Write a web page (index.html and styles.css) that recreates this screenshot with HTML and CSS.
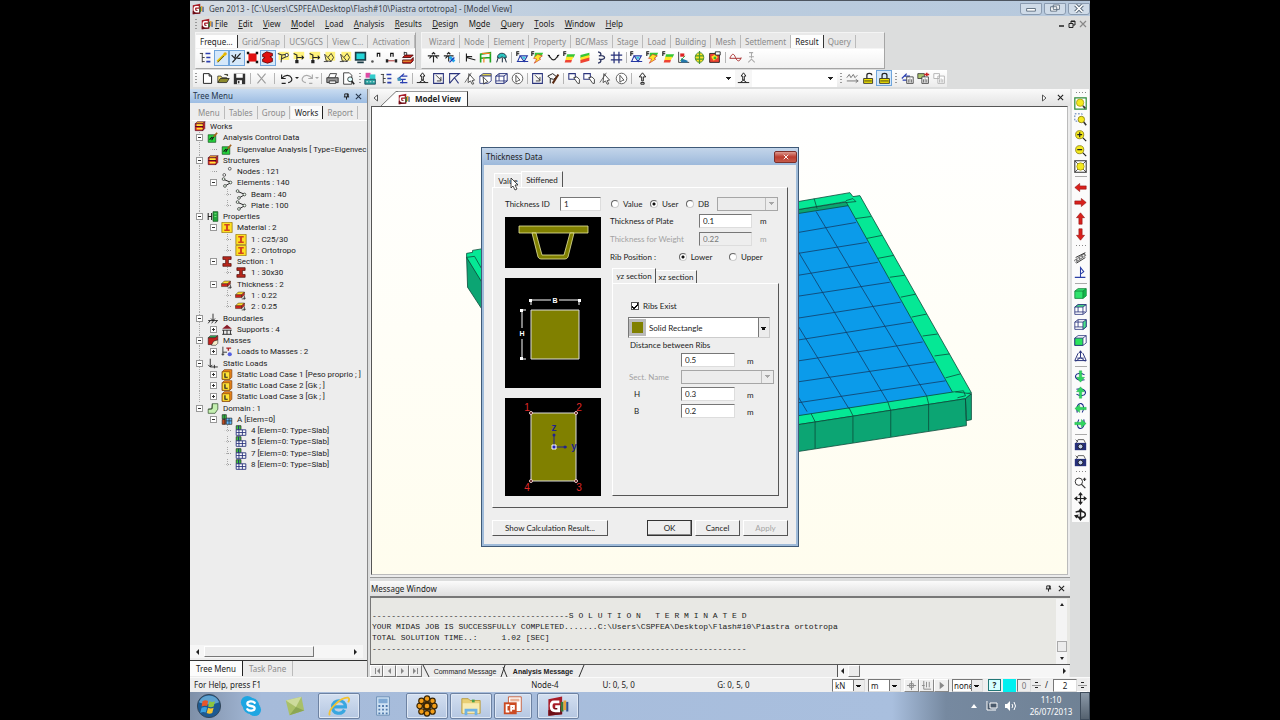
FILE: index.html
```html
<!DOCTYPE html>
<html lang="en">
<head>
<meta charset="utf-8">
<title>Gen 2013 - Piastra ortotropa</title>
<link rel="stylesheet" href="styles.css">
</head>
<body>
<svg class="sprite" aria-hidden="true">
  <symbol id="logo" viewBox="0 0 16 16"><path fill="#a81d28" d="M1 3 11 1v13L1 15z"/><path fill="#6e0f18" d="M1 11l10-3v6L1 15z"/><path fill="none" stroke="#fff" stroke-width="2" d="M9 5H5C3.500 5 3 6 3 8s1 3.500 3 3.500h2.500V8.500H6"/><path fill="#3b7a3a" d="M10 5h2v7h-2z"/><path fill="#e8a33a" d="M12 4h2v7h-2z"/><path fill="#32508e" d="M14 5h1.500v7H14z"/></symbol>
  <symbol id="tree" viewBox="0 0 16 16"><path fill="none" stroke="#222" d="M1 3h4M4 3v11M4 8h3M4 13h3"/><path fill="none" stroke="#2a3fb0" stroke-width="2" d="M8 3h6M9 8h5M9 13h5"/></symbol>
  <symbol id="wand" viewBox="0 0 16 16"><path stroke="#f0c800" stroke-width="3" d="M3 13 12 4"/><path stroke="#333" d="M3 14 11 6"/><circle cx="12.500" cy="3.500" r="2" fill="#e8b400"/></symbol>
  <symbol id="wand2" viewBox="0 0 16 16"><path fill="none" stroke="#222" stroke-width="1.500" d="M3 14 13 3M2 5l4 4 1-5M9 9h4"/></symbol>
  <symbol id="redbox" viewBox="0 0 16 16"><path fill="#e01010" d="M3 3h10v10H3z"/><path fill="#111" d="M1 1h3v3H1zM12 1h3v3h-3zM1 12h3v3H1zM12 12h3v3h-3z"/></symbol>
  <symbol id="redblob" viewBox="0 0 16 16"><path fill="#e01010" stroke="#5a0000" d="M2 4l5-3 7 2v3l-3 1 3 2v4l-6 2-6-2v-3l3-2-3-1z"/></symbol>
  <symbol id="yflag" viewBox="0 0 16 16"><path fill="#fff27a" d="M2 1h13v10H2z"/><path fill="none" stroke="#333" stroke-width="1.300" d="M1 3l5 2 6-1M6 5l-1 9M5 10l6-3"/><circle cx="12" cy="5" r="2" fill="#fff" stroke="#222"/></symbol>
  <symbol id="ytee" viewBox="0 0 16 16"><path fill="#fff27a" d="M2 1h13v9H2z"/><path fill="none" stroke="#222" stroke-width="1.400" d="M2 3l4 2v9M6 8h6"/><path fill="#222" d="M12 5l3 3-3 3zM4 11h4v4H4z"/></symbol>
  <symbol id="yweb" viewBox="0 0 16 16"><path fill="#fff27a" d="M3 1h12v11H3z"/><path fill="none" stroke="#222" d="M2 4l4 4 4-5 3 5-3 5-6-1zM1 13h5M6 8l4 5"/></symbol>
  <symbol id="screen" viewBox="0 0 16 16"><path fill="#1a3b45" d="M1 1h14v11H1zM4 13h8v2H4z"/><path fill="#25d5d8" d="M3 3h10v7H3z"/></symbol>
  <symbol id="num" viewBox="0 0 16 16"><path fill="none" stroke="#111" stroke-width="1.400" d="M9 7V2M9 3h3v4"/><circle cx="3" cy="13" r="1.600" fill="#555"/></symbol>
  <symbol id="numbar" viewBox="0 0 16 16"><path fill="none" stroke="#111" stroke-width="1.400" d="M7 7V2M7 3h3v4"/><path fill="none" stroke="#b55" stroke-width="1.500" d="M3 12h9"/><path fill="#222" d="M1 10h3v4H1zM12 10h3v4h-3z"/></symbol>
  <symbol id="layers" viewBox="0 0 16 16"><path fill="#c8221c" stroke="#400" d="M2 8l3-3h10l-3 3zM2 11h10l3-3v4l-3 3H2z"/><path stroke="#f3d23a" d="M2 12.500h10"/><path fill="none" stroke="#111" d="M4 5V1M4 2h3v3"/></symbol>
  <symbol id="react" viewBox="0 0 16 16"><path fill="none" stroke="#222" stroke-width="1.400" d="M1 6h14M8 6v8M3 9l3-3M13 9l-3-3M6 4l2-2 2 2"/></symbol>
  <symbol id="react2" viewBox="0 0 16 16"><path fill="none" stroke="#222" stroke-width="1.400" d="M1 6h12M7 6v7M3 9l3-3M5 4l2-2 2 2"/><path stroke="#22a5e8" stroke-width="3.500" d="M8 7l6 6"/><path stroke="#1b3ab5" stroke-width="1.500" d="M8 14l6-6"/></symbol>
  <symbol id="deform" viewBox="0 0 16 16"><path fill="none" stroke="#222" stroke-width="1.400" d="M3 3v10M3 8l11 3M3 7h7"/></symbol>
  <symbol id="frame" viewBox="0 0 16 16"><path fill="none" stroke="#22a522" stroke-width="2" d="M2 14V4l12-2v12M2 9l12-1"/><path fill="none" stroke="#f58220" stroke-width="1.500" d="M4 3h10M6 8v6"/></symbol>
  <symbol id="arch" viewBox="0 0 16 16"><path fill="#2bc3c0" stroke="#123" d="M3 8C3 1 14 1 14 8l-3 1-2-2-3 2z"/><path fill="none" stroke="#123" stroke-width="1.200" d="M4 8l-2 6M9 8v6M12 8l2 6"/></symbol>
  <symbol id="tri" viewBox="0 0 16 16"><path fill="none" stroke="#2336a3" stroke-width="1.300" d="M5 6h9l-4 7zM1 13h14M5 6l-3 7"/><path fill="none" stroke="#111" stroke-width="1.300" d="M1 6V1h3M1 3.500h3"/><path fill="#3bc6e0" d="M7 7h5l-2 4z"/></symbol>
  <symbol id="bolt" viewBox="0 0 16 16"><path fill="#37c837" d="M5 2h10l-3 6H4z"/><path fill="#ffe326" stroke="#c33" stroke-width=".8" d="M8 4l6 2-4 3 2 1-8 5 3-5-4-1z"/><path fill="none" stroke="#111" stroke-width="1.300" d="M1 6V1h3M1 3.500h3"/></symbol>
  <symbol id="moment" viewBox="0 0 16 16"><path fill="none" stroke="#222" stroke-width="1.400" d="M1 5c3 0 3 6 7 6s4-6 7-6M3 5v3M13 5v3"/></symbol>
  <symbol id="plate" viewBox="0 0 16 16"><path fill="#36c636" d="M5 4h10l-2 4H4z"/><path fill="#ffe326" d="M4 7h9l-2 4H3z"/><path fill="#e43" d="M3 11h8l-1 3H2z"/><path fill="none" stroke="#111" stroke-width="1.300" d="M1 6V1h3M1 3.500h3"/></symbol>
  <symbol id="contour" viewBox="0 0 16 16"><path fill="#36c636" d="M3 5l11-3v4L3 9z"/><path fill="#ffe326" d="M3 8l11-3v4L3 12z"/><path fill="#e43" d="M3 11l11-3v4L3 15z"/></symbol>
  <symbol id="brace" viewBox="0 0 16 16"><path fill="none" stroke="#2d3560" stroke-width="1.600" d="M5 1c5 1 4 5 1 5 4-1 7 0 7 2s-3 3-7 2c3 0 4 4-1 5"/></symbol>
  <symbol id="grid" viewBox="0 0 16 16"><path fill="none" stroke="#26307a" stroke-width="1.500" d="M5 1v14M11 1v14M1 5h14M1 11h14"/></symbol>
  <symbol id="solid" viewBox="0 0 16 16"><path fill="#ffe326" stroke="#287a28" d="M8 2c7 0 7 12 0 12S1 2 8 2z"/><path fill="none" stroke="#4a9a2a" stroke-width="1.500" d="M8 0v16M3 6h10M3 10h10"/></symbol>
  <symbol id="map" viewBox="0 0 16 16"><path fill="#e43" stroke="#111" d="M2 3h12v11H2z"/><path fill="#ffe326" d="M4 7l5-3 3 4-5 4z"/><path fill="#3b3" d="M7 7h3v3H7z"/><path fill="#fff" stroke="#111" d="M9 1h6v4H9z"/></symbol>
  <symbol id="chart" viewBox="0 0 16 16"><path fill="none" stroke="#222" d="M2 1v13h13"/><path fill="#d22" d="M4 3h5v4H4z"/><path fill="#27a" d="M5 9l8 3v2H5z"/><path stroke="#2a2" d="M4 12l6-6"/></symbol>
  <symbol id="wave" viewBox="0 0 16 16"><path fill="none" stroke="#a33" stroke-width="1.200" d="M1 9C4 2 6 3 8 8s5 6 7 0M1 9h14"/></symbol>
  <symbol id="ghost" viewBox="0 0 16 16"><path fill="none" stroke="#aaa" stroke-width="1.300" d="M8 2v7M4 14l4-4 4 4M5 2h5M5 7h6"/></symbol>
  <symbol id="new" viewBox="0 0 16 16"><path fill="#fff" stroke="#222" stroke-width="1.200" d="M3 2h7l3 3v9H3zM10 2v3h3"/></symbol>
  <symbol id="open" viewBox="0 0 16 16"><path fill="#f7e36b" stroke="#333" d="M1 13V5h4l1 2h6v2"/><path fill="#8c8a2c" stroke="#222" d="M1 13l3-5h11l-3 5zM9 3h4v2"/></symbol>
  <symbol id="save" viewBox="0 0 16 16"><path fill="#333" d="M1 2h14v13H1z"/><path fill="#fff" d="M4 2h8v5H4zM5 10h6v5H5z"/><path fill="#333" d="M6 11h2v3H6z"/></symbol>
  <symbol id="cut" viewBox="0 0 16 16"><path stroke="#9a9a9a" stroke-width="1.300" d="M3 2l10 12M13 2L3 14"/></symbol>
  <symbol id="undo" viewBox="0 0 16 16"><path fill="none" stroke="#222" stroke-width="1.400" d="M2 8c4-5 10-5 12-1s-2 6-4 6M2 3v5h5M2 14h5"/></symbol>
  <symbol id="redo" viewBox="0 0 16 16"><path fill="none" stroke="#aaa" stroke-width="1.400" d="M14 8C10 3 4 3 2 7s2 6 4 6M14 3v5H9M10 14h4"/></symbol>
  <symbol id="print" viewBox="0 0 16 16"><path fill="#999" stroke="#222" d="M1 7h14v6H1z"/><path fill="#fff" stroke="#222" d="M5 2h8l-2 5H3zM4 11h8v3H4z"/></symbol>
  <symbol id="preview" viewBox="0 0 16 16"><path fill="#fff" stroke="#222" d="M2 1h7l3 3v11H2z"/><circle cx="10" cy="9" r="3" fill="#dff" stroke="#222"/><path stroke="#222" stroke-width="2" d="M12 11l3 4"/></symbol>
  <symbol id="palette" viewBox="0 0 16 16"><path fill="#e04aa5" d="M2 1h6v6H2z"/><path fill="#3cc" d="M7 3h7v6H7z"/><path fill="#2aa3a0" stroke="#145" d="M1 9h13v6H1z"/><path stroke="#fff" d="M3 12h2M7 12h2M11 12h2"/></symbol>
  <symbol id="treeblue" viewBox="0 0 16 16"><path fill="none" stroke="#2a3fb0" stroke-width="1.500" d="M2 9l8-7M3 9h9M6 5h8M5 13h9M8 9v5"/><path fill="#49b" d="M2 7h4v4H2z"/></symbol>
  <symbol id="selnode" viewBox="0 0 16 16"><path fill="#fff" stroke="#222" stroke-width="1.200" d="M5 5l3-4 3 4H9v5H7V5zM1 13h14M4 13l4-3 4 3"/></symbol>
  <symbol id="selbox" viewBox="0 0 16 16"><path fill="none" stroke="#2b347c" stroke-width="1.300" d="M2 2h12v12H2z"/><path fill="none" stroke="#222" d="M5 4l6 6M11 6v5H6"/></symbol>
  <symbol id="selpoly" viewBox="0 0 16 16"><path fill="none" stroke="#2b347c" stroke-width="1.300" d="M2 14V2h12L8 7l5 7M2 14l6-7"/></symbol>
  <symbol id="curs" viewBox="0 0 16 16"><path fill="#fff" stroke="#333" d="M6 2l7 8-3 .5 2 4-2 .5-2-4-3 2z"/><path stroke="#555" d="M1 13L9 1"/></symbol>
  <symbol id="cube" viewBox="0 0 16 16"><path fill="#fff" stroke="#26307a" stroke-width="1.200" d="M1 5l4-3h10v9l-4 3H1zM1 5h10v9M11 5l4-3"/><path fill="none" stroke="#26307a" d="M5 2v9H1M5 11h10"/></symbol>
  <symbol id="cubey" viewBox="0 0 16 16"><path fill="#f3e04a" stroke="#26307a" d="M1 5l4-3h10v3H1z"/><path fill="#fff" stroke="#26307a" d="M1 5h14v6l-4 3H1z"/><path fill="#fff" stroke="#222" d="M5 6l6 6-3 1-2 2z"/></symbol>
  <symbol id="selcirc" viewBox="0 0 16 16"><circle cx="8" cy="8" r="6.500" fill="#fff" stroke="#444"/><path fill="#fff" stroke="#333" d="M6 4l5 6-2 .5-3 2z"/></symbol>
  <symbol id="paint" viewBox="0 0 16 16"><path fill="none" stroke="#222" stroke-width="1.200" d="M1 5l6-3 5 4-4 3-4-1zM4 8v6"/><path stroke="#5a2a12" stroke-width="2.500" d="M14 3L7 14"/></symbol>
  <symbol id="pasteb" viewBox="0 0 16 16"><path fill="#fff" stroke="#2b347c" stroke-width="1.300" d="M1 2h8v7H1z"/><path fill="#fff" stroke="#222" d="M7 7l4-1 3 3v5h-2z"/></symbol>
  <symbol id="updown" viewBox="0 0 16 16"><path fill="none" stroke="#222" stroke-width="1.200" d="M4 6l4-5 4 5H9v5H7V6zM6 13h4v2H6z"/></symbol>
  <symbol id="lockopen" viewBox="0 0 16 16"><path fill="none" stroke="#222" stroke-width="1.500" d="M6 8V4c0-3 6-3 6 0"/><path fill="#f2e400" stroke="#222" d="M2 8h11v6H2z"/><path stroke="#222" d="M3 11h9"/></symbol>
  <symbol id="lock" viewBox="0 0 16 16"><path fill="none" stroke="#222" stroke-width="1.500" d="M5 8V4c0-3 6-3 6 0v4"/><path fill="#f2e400" stroke="#222" d="M2 8h12v6H2z"/><path stroke="#222" d="M3 11h10"/></symbol>
  <symbol id="dims" viewBox="0 0 16 16"><path fill="none" stroke="#777" stroke-width="1.200" d="M1 7l3-4 2 4 3-4 2 4 3-3M1 11h13M12 9l3 2-3 2"/></symbol>
  <symbol id="docs" viewBox="0 0 16 16"><path fill="none" stroke="#2a3fb0" stroke-width="1.500" d="M1 8l6-6M2 10h5M4 5h7"/><path fill="#fff" stroke="#333" d="M7 6h8v8H7z"/><path stroke="#555" d="M9 9v4M11 8v5M13 9v4"/></symbol>
  <symbol id="docsr" viewBox="0 0 16 16"><path fill="#a9c36b" stroke="#333" d="M1 2h8v6H1z"/><path fill="#fff" stroke="#333" d="M6 6h8v8H6z"/><path stroke="#c22" stroke-width="2" d="M9 3h6M12 1v4"/><path stroke="#555" d="M8 9v4M10 8v5M12 9v4"/></symbol>
  <symbol id="docsg" viewBox="0 0 16 16"><path fill="#fff" stroke="#aaa" d="M1 2h7v6H1zM6 5h8v9H6z"/><path stroke="#aaa" d="M8 9v4M10 8v5M12 9v4"/></symbol>
  <symbol id="zoomfit" viewBox="0 0 16 16"><path fill="#fff" stroke="#2d8a3a" stroke-width="1.500" d="M1 1h14v14H1z"/><circle cx="7.500" cy="7" r="4.500" fill="#f5ea1e" stroke="#a89b10"/><path stroke="#333" stroke-width="2" d="M11 11l3 3"/></symbol>
  <symbol id="zoomall" viewBox="0 0 16 16"><path fill="#fff" stroke="#333" stroke-width="1.300" d="M1 1h14v14H1z"/><path stroke="#333" d="M1 1l14 14M15 1L1 15"/><circle cx="8" cy="8" r="4.500" fill="#f5ea1e" stroke="#a89b10"/></symbol>
  <symbol id="zoomwin" viewBox="0 0 16 16"><path fill="none" stroke="#2d5aa0" stroke-dasharray="2" d="M1 1h9v9H1z"/><circle cx="9" cy="8" r="4" fill="#f5ea1e" stroke="#887d10"/><path stroke="#333" stroke-width="2" d="M12 11l3 4"/></symbol>
  <symbol id="zoomin" viewBox="0 0 16 16"><circle cx="7" cy="7" r="5" fill="#f5ea1e" stroke="#887d10"/><path stroke="#222" stroke-width="1.500" d="M4 7h6M7 4v6M11 11l4 4"/></symbol>
  <symbol id="zoomout" viewBox="0 0 16 16"><circle cx="7" cy="7" r="5" fill="#f5ea1e" stroke="#887d10"/><path stroke="#222" stroke-width="1.500" d="M4 7h6M11 11l4 4"/></symbol>
  <symbol id="arrow" viewBox="0 0 16 16"><path fill="#d9201c" stroke="#8d1010" stroke-width=".7" d="M1 8l6-5v3h8v4H7v3z"/></symbol>
  <symbol id="road" viewBox="0 0 16 16"><path stroke="#777" stroke-width="4" d="M1 13L14 4"/><path stroke="#111" d="M2 8l12-6M3 15l11-7"/><path stroke="#eee" stroke-width="2" stroke-dasharray="2" d="M1 13L14 4"/></symbol>
  <symbol id="axis" viewBox="0 0 16 16"><path fill="none" stroke="#2a3fa5" stroke-width="1.300" d="M1 14h13M8 14V2l4 5-4 3"/></symbol>
  <symbol id="cubeg" viewBox="0 0 16 16"><path fill="#2fe36c" stroke="#15803c" d="M1 5l4-3h10v9l-4 3H1z"/><path fill="#12b54a" d="M11 5l4-3v9l-4 3z"/><path fill="none" stroke="#15803c" d="M1 5h10v9M11 5l4-3"/></symbol>
  <symbol id="cubetop" viewBox="0 0 16 16"><path fill="#fff" stroke="#26307a" d="M1 5l4-3h10v9l-4 3H1z"/><path fill="#4be08a" stroke="#26307a" d="M1 5l4-3h10l-4 3zM11 5v9"/><path fill="none" stroke="#26307a" d="M5 5v6H1M5 11h9"/></symbol>
  <symbol id="cuber" viewBox="0 0 16 16"><path fill="#fff" stroke="#26307a" d="M1 5l4-3h10v9l-4 3H1zM1 5h10"/><path fill="#4be08a" stroke="#26307a" d="M11 5l4-3v9l-4 3z"/><path fill="none" stroke="#26307a" d="M5 2v9H1M5 11h6"/></symbol>
  <symbol id="cubef" viewBox="0 0 16 16"><path fill="#fff" stroke="#26307a" d="M1 5l4-3h10v9l-4 3H1zM11 5l4-3"/><path fill="#2be35c" stroke="#26307a" d="M1 5h10v9H1z"/></symbol>
  <symbol id="persp" viewBox="0 0 16 16"><path fill="none" stroke="#26307a" stroke-width="1.200" d="M8 1v8L2 14M8 9l6 5M5 4L1 13h14L11 4M6 4l2-3 2 3M4 10h8"/></symbol>
  <symbol id="rot" viewBox="0 0 16 16"><path fill="none" stroke="#20308c" stroke-width="1.300" d="M3 4c8-2 12 2 11 5s-6 4-11 1"/><path fill="#2fd65f" stroke="#1ea548" stroke-width=".5" d="M6.500 15V7H3l5-6 5 6H9.500v8z"/></symbol>
  <symbol id="cam" viewBox="0 0 16 16"><path fill="#26307a" d="M1 6h14v9H1z"/><path fill="none" stroke="#444" d="M3 6l2-4h7l2 4M2 2l3 3"/><circle cx="8" cy="10.500" r="3" fill="#c5d3ee" stroke="#111"/></symbol>
  <symbol id="zoomdyn" viewBox="0 0 16 16"><circle cx="6" cy="7" r="4.500" fill="#fff" stroke="#333" stroke-width="1.200"/><path stroke="#333" stroke-width="1.500" d="M9 10l5 5M11 4h4M13 2v4"/></symbol>
  <symbol id="pan" viewBox="0 0 16 16"><path stroke="#222" stroke-width="1.500" d="M8 2v12M2 8h12"/><path fill="#222" d="M8 0l3 4H5zM8 16l3-4H5zM0 8l4-3v6zM16 8l-4-3v6z"/></symbol>
  <symbol id="orbit" viewBox="0 0 16 16"><path fill="none" stroke="#222" stroke-width="1.800" d="M2 5c5-2 12-1 12 3s-7 5-11 2M8 2v12"/><path fill="#222" d="M8 0l3 4H5zM8 16l3-4H5zM0 9l6-1-3 5z"/></symbol>
  <symbol id="books" viewBox="0 0 16 16"><path fill="#f0a830" stroke="#402" stroke-width=".8" d="M1 4l3-3h11l-3 3z"/><path fill="#d6231c" stroke="#402" stroke-width=".8" d="M1 4h11v4H1zM1 8h11v6H1zM12 4l3-3v10l-3 3z"/><path stroke="#ffe53b" stroke-width="2.500" d="M3 6h9M3 11h9"/></symbol>
  <symbol id="green" viewBox="0 0 16 16"><path fill="#25d33d" stroke="#114d1a" d="M1 4h11v11H1z"/><path stroke="#111" stroke-width="1.500" d="M3 11l4-4M6 12l3-5"/><path stroke="#a3621d" stroke-width="2.500" d="M9 7l5-6"/></symbol>
  <symbol id="nodes" viewBox="0 0 16 16"><circle cx="4" cy="13" r="2" fill="#fff" stroke="#222"/><circle cx="12" cy="4" r="2" fill="#fff" stroke="#222"/></symbol>
  <symbol id="elem" viewBox="0 0 16 16"><path fill="none" stroke="#222" stroke-width="1.400" d="M2 3l12 5L5 13"/><circle cx="3" cy="3" r="2" fill="#efe" stroke="#222"/><circle cx="13" cy="8" r="2" fill="#efe" stroke="#222"/><circle cx="5" cy="13" r="2" fill="#efe" stroke="#222"/></symbol>
  <symbol id="props" viewBox="0 0 16 16"><path fill="none" stroke="#222" stroke-width="1.500" d="M1 3v10M6 3v10M1 8h5"/><path fill="#22a83b" stroke="#114d1a" d="M8 1h7v14H8z"/><path stroke="#9f9" d="M10 4h3M10 8h3"/></symbol>
  <symbol id="matl" viewBox="0 0 16 16"><path fill="#ffdf23" stroke="#8a6d0a" d="M.5.5h15v15H.5z"/><path fill="#d2461d" d="M4 3h8v2H9.500v6H12v2H4v-2h2.500V5H4z"/></symbol>
  <symbol id="ibeam" viewBox="0 0 16 16"><path fill="#b9271c" stroke="#4a0c08" d="M2 1h12v4h-4v6h4v4H2v-4h4V5H2z"/></symbol>
  <symbol id="thick" viewBox="0 0 16 16"><path fill="#ffe02d" stroke="#432" stroke-width=".8" d="M0 7l4-4h9l-4 4z"/><path fill="#d6231c" stroke="#432" stroke-width=".8" d="M0 7h9v4H0zM9 7l4-4v4l-4 4z"/><path stroke="#222" d="M13 8v6M11 12h4M9 13h3"/></symbol>
  <symbol id="bound" viewBox="0 0 16 16"><path fill="none" stroke="#222" stroke-width="1.300" d="M8 1v10M1 11h14M5 8l3 3 3-3M4 11l-3 4M9 11l-3 4M14 11l-3 4"/></symbol>
  <symbol id="supp" viewBox="0 0 16 16"><path fill="#8a1d28" d="M8 1l7 6H1z"/><path fill="none" stroke="#222" stroke-width="1.300" d="M1 9h14M3 9v6M8 9v6M13 9v6M1 15h14"/></symbol>
  <symbol id="mass" viewBox="0 0 16 16"><path fill="#f5eec8" stroke="#222" stroke-width=".8" d="M6 7h9v5l-3 3H6z"/><path fill="#2fb55a" stroke="#222" stroke-width=".8" d="M1 4l3-3h11l-4 3z"/><path fill="#c4211c" stroke="#222" stroke-width=".8" d="M1 4h10l4-3v6l-6 2-3 5H1z"/></symbol>
  <symbol id="lmass" viewBox="0 0 16 16"><path fill="none" stroke="#222" stroke-width="1.200" d="M2 1v13M2 9h6M0 12h4"/><circle cx="12" cy="12" r="3" fill="#5560e0"/><path stroke="#a22" stroke-width="2" d="M7 3h7M10 3v4"/></symbol>
  <symbol id="sload" viewBox="0 0 16 16"><path fill="none" stroke="#222" stroke-width="1.300" d="M4 1v12M1 10l3 3 3-3M4 13h11M10 10v5"/></symbol>
  <symbol id="lcase" viewBox="0 0 16 16"><path fill="#f28a1a" stroke="#7c3a06" d="M1 4l3-3h11v11l-3 3H1z"/><path fill="#ffe435" stroke="#7c3a06" d="M1 4h11v11H1z"/><path fill="none" stroke="#222" stroke-width="1.800" d="M5 6v6h4"/></symbol>
  <symbol id="domain" viewBox="0 0 16 16"><path fill="#c4efb0" stroke="#2a4a26" d="M7 1h8v8l-4 6H1V9h5z"/><path fill="none" stroke="#2a4a26" d="M7 1v7L1 9"/></symbol>
  <symbol id="dgrid" viewBox="0 0 16 16"><path fill="#2fc441" stroke="#222" d="M1 1h6v6H1z"/><path fill="#e5531c" stroke="#222" d="M1 8h5v7H1z"/><path fill="#5cb8ff" stroke="#222" d="M7 6h8v9H7z"/><path stroke="#222" d="M11 6v9M7 10h8M4 1v14"/></symbol>
  <symbol id="slab" viewBox="0 0 16 16"><path fill="#3bc441" stroke="#222" d="M1 1h7v6H1z"/><path fill="#fff" stroke="#26307a" stroke-width="1.300" d="M1 7h14v8H1zM1 11h14M5 7v8M10 7v8"/><path stroke="#26307a" stroke-width="1.500" d="M4.500 1v6"/></symbol>
  <symbol id="pin" viewBox="0 0 16 16"><path fill="none" stroke="#111" stroke-width="2" d="M4 9V2h8v7M2 9h12M8 9v6M10 2v7"/></symbol>
  <symbol id="x" viewBox="0 0 16 16"><path stroke="currentColor" stroke-width="2.500" d="M2 2l12 12M14 2L2 14"/></symbol>
</svg>

<main class="app">
  <header class="titlebar">
    <svg class="ico"><use href="#logo"/></svg>
    <h1>Gen 2013 - [C:\Users\CSPFEA\Desktop\Flash#10\Piastra ortotropa] - [Model View]</h1>
    <div class="winbtns">
      <button aria-label="Minimize"><svg viewBox="0 0 16 10"><path fill="#fff" stroke="#567" d="M3 5h10v3H3z"/></svg></button>
      <button aria-label="Restore"><svg viewBox="0 0 16 10"><path fill="#fff" stroke="#567" d="M6 1h7v5H6zM3 3h7v5H3z"/></svg></button>
      <button aria-label="Close"><svg viewBox="0 0 16 10"><path stroke="#567" stroke-width="4" d="M4 1l8 8M12 1L4 9"/><path stroke="#fff" stroke-width="2" d="M4 1l8 8M12 1L4 9"/></svg></button>
    </div>
  </header>

  <nav class="menubar">
    <span class="grip"></span><svg class="ico"><use href="#logo"/></svg>
    <div class="menus">
      <button><u>F</u>ile</button><button><u>E</u>dit</button><button><u>V</u>iew</button><button><u>M</u>odel</button><button><u>L</u>oad</button><button><u>A</u>nalysis</button><button><u>R</u>esults</button><button><u>D</u>esign</button><button>M<u>o</u>de</button><button><u>Q</u>uery</button><button><u>T</u>ools</button><button><u>W</u>indow</button><button><u>H</u>elp</button>
    </div>
    <div class="mdi">
      <button aria-label="Minimize view"><svg viewBox="0 0 8 8"><path stroke="#222" stroke-width="1.500" d="M2 6h5"/></svg></button>
      <button aria-label="Restore view"><svg viewBox="0 0 8 8"><path fill="none" stroke="#222" d="M3 3V1h4v4H5M1 3.500h4v4H1zM3 1.500h4"/></svg></button>
      <button aria-label="Close view"><svg viewBox="0 0 8 8"><path stroke="#888" stroke-width="1.200" d="M1 1l6 6M7 1L1 7"/></svg></button>
    </div>
  </nav>

  <div class="ribbons">
    <section class="ribbon ribbon-a">
      <div class="rtabs"><button class="on">Freque...</button><button>Grid/Snap</button><button>UCS/GCS</button><button>View C...</button><button>Activation</button></div>
      <div class="tools">
        <button aria-label="Works tree"><svg><use href="#tree"/></svg></button><button class="sel" aria-label="Select single"><svg><use href="#wand"/></svg></button><button class="sel" aria-label="Select window"><svg><use href="#wand2"/></svg></button><button aria-label="Box"><svg><use href="#redbox"/></svg></button><button class="sel" aria-label="Hidden"><svg><use href="#redblob"/></svg></button><button aria-label="Shrink"><svg><use href="#yflag"/></svg></button><button aria-label="Node select"><svg><use href="#ytee"/></svg></button><button aria-label="Element select"><svg><use href="#ytee"/></svg></button><button aria-label="Web"><svg><use href="#yweb"/></svg></button><button aria-label="Polygon"><svg><use href="#yweb"/></svg></button><button aria-label="Display"><svg><use href="#screen"/></svg></button><button aria-label="Node number"><svg><use href="#num"/></svg></button><button aria-label="Element number"><svg><use href="#numbar"/></svg></button><button aria-label="Property number"><svg><use href="#layers"/></svg></button>
      </div>
    </section>
    <section class="ribbon ribbon-b">
      <div class="rtabs"><button>Wizard</button><button>Node</button><button>Element</button><button>Property</button><button>BC/Mass</button><button>Stage</button><button>Load</button><button>Building</button><button>Mesh</button><button>Settlement</button><button class="on">Result</button><button>Query</button></div>
      <div class="tools">
        <button aria-label="Reaction"><svg><use href="#react"/></svg></button><button aria-label="Search reaction"><svg><use href="#react2"/></svg></button><i class="sep"></i>
        <button aria-label="Deformed"><svg><use href="#deform"/></svg></button><button aria-label="Frame"><svg><use href="#frame"/></svg></button><button aria-label="Arch"><svg><use href="#arch"/></svg></button><i class="sep"></i>
        <button aria-label="Truss force"><svg><use href="#tri"/></svg></button><button aria-label="Beam force"><svg><use href="#bolt"/></svg></button><button aria-label="Moment"><svg><use href="#moment"/></svg></button><button aria-label="Plate force"><svg><use href="#plate"/></svg></button><button aria-label="Contour"><svg><use href="#contour"/></svg></button><button aria-label="Cutting"><svg><use href="#brace"/></svg></button><button aria-label="Wall"><svg><use href="#grid"/></svg></button><i class="sep"></i>
        <button aria-label="Truss stress"><svg><use href="#tri"/></svg></button><button aria-label="Beam stress"><svg><use href="#bolt"/></svg></button><button aria-label="Plate stress"><svg><use href="#plate"/></svg></button><button aria-label="Graph"><svg><use href="#chart"/></svg></button><button aria-label="Solid stress"><svg><use href="#solid"/></svg></button><button aria-label="Map"><svg><use href="#map"/></svg></button><i class="sep"></i>
        <button aria-label="Vibration"><svg><use href="#wave"/></svg></button><button aria-label="Buckling"><svg><use href="#ghost"/></svg></button>
      </div>
    </section>
  </div>

  <div class="bar2">
    <div class="tools t-file"><span class="grip"></span><button aria-label="New"><svg><use href="#new"/></svg></button><button aria-label="Open"><svg><use href="#open"/></svg></button><button aria-label="Save"><svg><use href="#save"/></svg></button><i class="sep"></i><button aria-label="Cut"><svg><use href="#cut"/></svg></button><i class="sep wide"></i><button aria-label="Undo"><svg><use href="#undo"/></svg></button><i class="caret"></i><button aria-label="Redo"><svg><use href="#redo"/></svg></button><i class="caret dim"></i><i class="sep"></i><button aria-label="Print"><svg><use href="#print"/></svg></button><button aria-label="Preview"><svg><use href="#preview"/></svg></button></div>
    <div class="tools t-select"><span class="grip"></span><button aria-label="Groups"><svg><use href="#palette"/></svg></button><button aria-label="Tree"><svg><use href="#tree"/></svg></button><button aria-label="Tree select"><svg><use href="#treeblue"/></svg></button><i class="sep"></i><button aria-label="Select identity"><svg><use href="#selnode"/></svg></button><button aria-label="Select by window"><svg><use href="#selbox"/></svg></button><button aria-label="Select by polygon"><svg><use href="#selpoly"/></svg></button><button aria-label="Intersect"><svg><use href="#curs"/></svg></button><button aria-label="Plane"><svg><use href="#cubey"/></svg></button><button aria-label="Volume"><svg><use href="#cube"/></svg></button><button aria-label="Select all"><svg><use href="#selcirc"/></svg></button><i class="sep"></i><button aria-label="Select previous"><svg><use href="#selbox"/></svg></button><button aria-label="Recent"><svg><use href="#paint"/></svg></button><i class="sep"></i><button aria-label="Unselect window"><svg><use href="#pasteb"/></svg></button><button aria-label="Unselect polygon"><svg><use href="#pasteb"/></svg></button><button aria-label="Unselect intersect"><svg><use href="#curs"/></svg></button><button aria-label="Unselect all"><svg><use href="#selcirc"/></svg></button><i class="sep"></i><button aria-label="Node filter"><svg><use href="#updown"/></svg></button></div>
    <select class="pick" aria-label="Node list"><option></option></select>
    <button class="lone" aria-label="Element filter"><svg><use href="#selnode"/></svg></button>
    <select class="pick" aria-label="Element list"><option></option></select>
    <div class="tools t-lock"><span class="grip"></span><button aria-label="Dimensions"><svg><use href="#dims"/></svg></button><button aria-label="Unlock"><svg><use href="#lockopen"/></svg></button><button class="sel" aria-label="Lock"><svg><use href="#lock"/></svg></button></div>
    <div class="tools t-lock"><span class="grip"></span><button aria-label="Report tree"><svg><use href="#docs"/></svg></button><button aria-label="Report image"><svg><use href="#docsr"/></svg></button><button aria-label="Report"><svg><use href="#docsg"/></svg></button></div>
  </div>

  <div class="work">
    <aside class="side">
      <div class="side-head"><h2>Tree Menu</h2><button aria-label="Pin"><svg><use href="#pin"/></svg></button><button aria-label="Close panel"><svg><use href="#x"/></svg></button></div>
      <div class="side-tabs"><button>Menu</button><button>Tables</button><button>Group</button><button class="on">Works</button><button>Report</button></div>
      <ul class="tree">
        <li class="l0"><svg><use href="#books"/></svg>Works</li>
        <li class="l1"><i class="tg"></i><svg><use href="#green"/></svg>Analysis Control Data</li>
        <li class="l2"><i class="st"></i><svg><use href="#green"/></svg>Eigenvalue Analysis [ Type=Eigenvec</li>
        <li class="l1"><i class="tg"></i><svg><use href="#books"/></svg>Structures</li>
        <li class="l2"><i class="st"></i><svg><use href="#nodes"/></svg>Nodes : 121</li>
        <li class="l2"><i class="tg"></i><svg><use href="#elem"/></svg>Elements : 140</li>
        <li class="l3"><i class="st"></i><svg><use href="#elem"/></svg>Beam : 40</li>
        <li class="l3"><i class="st"></i><svg><use href="#elem"/></svg>Plate : 100</li>
        <li class="l1"><i class="tg"></i><svg><use href="#props"/></svg>Properties</li>
        <li class="l2"><i class="tg"></i><svg><use href="#matl"/></svg>Material : 2</li>
        <li class="l3"><i class="st"></i><svg><use href="#matl"/></svg>1 : C25/30</li>
        <li class="l3"><i class="st"></i><svg><use href="#matl"/></svg>2 : Ortotropo</li>
        <li class="l2"><i class="tg"></i><svg><use href="#ibeam"/></svg>Section : 1</li>
        <li class="l3"><i class="st"></i><svg><use href="#ibeam"/></svg>1 : 30x30</li>
        <li class="l2"><i class="tg"></i><svg><use href="#thick"/></svg>Thickness : 2</li>
        <li class="l3"><i class="st"></i><svg><use href="#thick"/></svg>1 : 0.22</li>
        <li class="l3"><i class="st"></i><svg><use href="#thick"/></svg>2 : 0.25</li>
        <li class="l1"><i class="tg"></i><svg><use href="#bound"/></svg>Boundaries</li>
        <li class="l2"><i class="tg plus"></i><svg><use href="#supp"/></svg>Supports : 4</li>
        <li class="l1"><i class="tg"></i><svg><use href="#mass"/></svg>Masses</li>
        <li class="l2"><i class="tg plus"></i><svg><use href="#lmass"/></svg>Loads to Masses : 2</li>
        <li class="l1"><i class="tg"></i><svg><use href="#sload"/></svg>Static Loads</li>
        <li class="l2"><i class="tg plus"></i><svg><use href="#lcase"/></svg>Static Load Case 1 [Peso proprio ; ]</li>
        <li class="l2"><i class="tg plus"></i><svg><use href="#lcase"/></svg>Static Load Case 2 [Gk ; ]</li>
        <li class="l2"><i class="tg plus"></i><svg><use href="#lcase"/></svg>Static Load Case 3 [Gk ; ]</li>
        <li class="l1 last"><i class="tg"></i><svg><use href="#domain"/></svg>Domain : 1</li>
        <li class="l2 end"><i class="tg"></i><svg><use href="#dgrid"/></svg>A [Elem=0]</li>
        <li class="l3 end"><i class="st"></i><svg><use href="#slab"/></svg>4 [Elem=0: Type=Slab]</li>
        <li class="l3 end"><i class="st"></i><svg><use href="#slab"/></svg>5 [Elem=0: Type=Slab]</li>
        <li class="l3 end"><i class="st"></i><svg><use href="#slab"/></svg>7 [Elem=0: Type=Slab]</li>
        <li class="l3 end"><i class="st"></i><svg><use href="#slab"/></svg>8 [Elem=0: Type=Slab]</li>
      </ul>
      <div class="hscroll"><i class="al"></i><span class="thumb"></span><i class="ar"></i></div>
      <div class="side-foot"><button class="on">Tree Menu</button><button>Task Pane</button></div>
    </aside>

    <div class="center">
      <section class="view">
        <div class="view-tabs">
          <svg class="tri" viewBox="0 0 8 8"><path fill="#fff" stroke="#555" d="M5.500 1v6L2 4z"/></svg>
          <svg class="lead" viewBox="0 0 18 15"><path fill="#fdfdfd" stroke="#777" d="M1 15L16 .5h3V15"/></svg>
          <div class="vtab"><svg><use href="#logo"/></svg>Model View</div>
          <svg class="tri next" viewBox="0 0 8 8"><path fill="#fff" stroke="#555" d="M2.500 1v6L6 4z"/></svg><button aria-label="Close tab"><svg><use href="#x"/></svg></button>
        </div>
        <div class="canvas">
          <svg class="model" viewBox="371 107 698 468" preserveAspectRatio="xMinYMin meet" role="img" aria-label="Structural model">
            <g stroke="#0b4a3a" stroke-width=".8" stroke-linejoin="round">
              <path fill="#0ca573" d="M466 258l16 25v28l-15-23z"/>
              <path fill="#05e895" d="M466 258v-4l6-1v-2l24-4v60z"/>
              <path fill="none" d="M466 258l8-1 8 14"/>
              <path fill="#0ba570" d="M799 210l51-8v7l-51 7z"/>
              <path fill="#0b9bea" d="M799 214l51-8 106 188-157 24z"/>
              <path fill="#05e895" d="M799 202l52-9 3 4 7-1 112 198-17 3-109-195-48 8z"/>
              <path fill="#05e895" d="M799 417l157-24 17 2-6 5-168 26z"/>
              <path fill="#0ca573" d="M799 426l168-26 1 27-169 26zM967 400l6-5v26l-5 1z"/>
              <path fill="none" d="M815 199l3 10M847 201l7-2 3 3-10 1M957 393l8-1 2 5-8 2M857 219l15-2M868 239l15-3M879 259l16-3M891 278l15-2M902 298l15-3M913 318l15-3M924 337l15-2M936 357l15-2M947 379l15-4M812 415l4 8v27M850 409l4 8v27M889 403l3 9v26M928 397l2 8v27"/>
              <path fill="none" stroke="#123c66" d="M799 233l58-10M799 254l69-11M799 276l80-13M799 297l92-14M799 319l103-16M799 341l114-18M799 362l125-19M799 383l137-20M799 404l148-22M817 212l111 185M799 252l90 151M799 327l51 83M799 398l9 15"/>
            </g>
          </svg>

          <form class="dialog" aria-label="Thickness Data" onsubmit="return false">
            <div class="dlg-title"><h2>Thickness Data</h2><button type="button" aria-label="Close dialog"><svg><use href="#x"/></svg></button></div>
            <div class="dlg-body">
              <div class="dtabs"><button type="button">Value</button><button type="button" class="on">Stiffened</button></div>
              <div class="page">
                <div class="figs">
                  <div class="idrow"><label for="tid">Thickness ID</label><input id="tid" class="f" value="1"></div>
                  <svg class="fig" viewBox="0 0 96 51"><path fill="#808000" stroke="#e8e8a0" stroke-width=".8" d="M14 9h69v7H14z"/><path fill="#808000" stroke="#e8e8a0" stroke-width=".8" d="M27 16h4l6 22h22l6-22h4l-6 24q-1 2-3 2H36q-2 0-3-2z"/></svg>
                  <svg class="fig" viewBox="0 0 96 110"><path fill="#808000" stroke="#ddd" d="M26 32h48v49H26z"/><path fill="none" stroke="#fff" d="M26 22h20M54 22h20M26 22v5M74 22v5M17 32v18M17 61v20M16 32h5M16 81h5"/><path fill="#fff" d="M24 21h3v3h-3zM73 21h3v3h-3zM15 31h3v3h-3zM15 79h3v3h-3z"/><text class="dim" x="50" y="25">B</text><text class="dim" x="17" y="58">H</text></svg>
                  <svg class="fig" viewBox="0 0 96 98"><path fill="#808000" stroke="#ddd" d="M26 15h45v68H26z"/><g fill="#400" stroke="#ecc"><circle cx="26" cy="15" r="1.500"/><circle cx="71" cy="15" r="1.500"/><circle cx="26" cy="83" r="1.500"/><circle cx="71" cy="83" r="1.500"/></g><path fill="none" stroke="#23238c" d="M49 49V36M49 49h13"/><circle cx="49" cy="37" r="1.500" fill="#23238c"/><circle cx="60" cy="49" r="1.500" fill="#23238c"/><path fill="#22b" stroke="#fff" d="M47 47h4v4h-4z"/><text class="red" x="22" y="13">1</text><text class="red" x="74" y="13">2</text><text class="red" x="22" y="93">4</text><text class="red" x="74" y="93">3</text><text class="ax" x="49" y="33">z</text><text class="ax" x="69" y="52">y</text></svg>
                </div>
                <div class="opts">
                  <div class="orow kinds"><label><input type="radio" name="k">Value</label><label><input type="radio" name="k" checked>User</label><label><input type="radio" name="k">DB</label><select class="f sel-off" aria-label="DB section" disabled><option></option></select></div>
                  <div class="orow val"><label for="tp">Thickness of Plate</label><input id="tp" class="f" value="0.1"><span>m</span></div>
                  <div class="orow val off"><label for="tw">Thickness for Weight</label><input id="tw" class="f" value="0.22" disabled><span>m</span></div>
                  <div class="orow rib"><span>Rib Position :</span><label><input type="radio" name="r" checked>Lower</label><label><input type="radio" name="r">Upper</label></div>
                  <div class="stabs"><button type="button" class="on">yz section</button><button type="button">xz section</button></div>
                  <div class="sect">
                    <label class="chk"><input type="checkbox" checked>Ribs Exist</label>
                    <div class="shape"><i></i><select aria-label="Rib shape"><option>Solid Rectangle</option></select></div>
                    <label class="dist" for="dr">Distance between Ribs</label>
                    <div class="srow"><span></span><input id="dr" class="f" value="0.5"><span>m</span></div>
                    <div class="srow off"><label for="sn">Sect. Name</label><select id="sn" class="f sel-off" disabled><option></option></select></div>
                    <div class="srow"><label class="in" for="hh">H</label><input id="hh" class="f" value="0.3"><span>m</span></div>
                    <div class="srow"><label class="in" for="bb">B</label><input id="bb" class="f" value="0.2"><span>m</span></div>
                  </div>
                </div>
              </div>
              <div class="dlg-foot"><button type="button" class="wide">Show Calculation Result...</button><button type="button" class="def">OK</button><button type="button">Cancel</button><button type="button" disabled>Apply</button></div>
            </div>
            <svg class="pointer" viewBox="0 0 9 14"><path fill="#fff" stroke="#222" stroke-width=".8" d="M1 1v10l2-2 2 4 2-1-2-4h3z"/></svg>
          </form>
        </div>
      </section>

      <section class="msg">
        <div class="msg-head"><h2>Message Window</h2><button aria-label="Pin messages"><svg><use href="#pin"/></svg></button><button aria-label="Close messages"><svg><use href="#x"/></svg></button></div>
        <div class="msg-body">
<pre>-----------------------------------------S O L U T I O N   T E R M I N A T E D
YOUR MIDAS JOB IS SUCCESSFULLY COMPLETED.......C:\Users\CSPFEA\Desktop\Flash#10\Piastra ortotropa
TOTAL SOLUTION TIME..:     1.02 [SEC]
------------------------------------------------------------------------------</pre>
          <div class="vscroll"><i class="au"></i><span class="thumb"></span><i class="ad"></i></div>
        </div>
        <div class="msg-tabs">
          <div class="nav"><button aria-label="First"><i class="bar"></i><i class="al"></i></button><button aria-label="Previous"><i class="al"></i></button><button aria-label="Next"><i class="ar"></i></button><button aria-label="Last"><i class="ar"></i><i class="bar"></i></button></div>
          <svg class="slant" viewBox="0 0 8 12"><path fill="none" stroke="#333" d="M1 0l6 12"/></svg>
          <button>Command Message</button>
          <svg class="slant" viewBox="0 0 8 12"><path fill="none" stroke="#333" d="M1 12L5 0M3 2l4 10"/></svg>
          <button class="on">Analysis Message</button>
          <svg class="slant" viewBox="0 0 8 12"><path fill="none" stroke="#333" d="M1 12L6 0"/></svg>
          <div class="hscroll mini"><i class="al"></i><span class="thumb"></span><i class="ar"></i></div>
        </div>
      </section>
    </div>

    <div class="vtools">
      <span class="hgrip"></span><button aria-label="Zoom fit"><svg><use href="#zoomfit"/></svg></button><button aria-label="Zoom window"><svg><use href="#zoomwin"/></svg></button><button aria-label="Zoom in"><svg><use href="#zoomin"/></svg></button><button aria-label="Zoom out"><svg><use href="#zoomout"/></svg></button><button aria-label="Auto fit"><svg><use href="#zoomall"/></svg></button><i class="hsep"></i>
      <button aria-label="Pan left"><svg><use href="#arrow"/></svg></button><button aria-label="Pan right"><svg class="r180"><use href="#arrow"/></svg></button><button aria-label="Pan up"><svg class="r90"><use href="#arrow"/></svg></button><button aria-label="Pan down"><svg class="r270"><use href="#arrow"/></svg></button><span class="hgrip"></span>
      <button aria-label="Render"><svg><use href="#road"/></svg></button><button aria-label="Axis"><svg><use href="#axis"/></svg></button><i class="hsep"></i>
      <button aria-label="Iso view"><svg><use href="#cubeg"/></svg></button><button aria-label="Top view"><svg><use href="#cubetop"/></svg></button><button aria-label="Right view"><svg><use href="#cuber"/></svg></button><button aria-label="Front view"><svg><use href="#cubef"/></svg></button><button aria-label="Angle view"><svg><use href="#persp"/></svg></button><i class="hsep"></i>
      <button aria-label="Rotate down"><svg class="r180"><use href="#rot"/></svg></button><button aria-label="Rotate up"><svg><use href="#rot"/></svg></button><button aria-label="Rotate left"><svg class="r270"><use href="#rot"/></svg></button><button aria-label="Rotate right"><svg class="r90"><use href="#rot"/></svg></button><i class="hsep"></i>
      <button aria-label="Capture"><svg><use href="#cam"/></svg></button><button aria-label="Snapshots"><svg><use href="#cam"/></svg></button><span class="hgrip"></span>
      <button aria-label="Dynamic zoom"><svg><use href="#zoomdyn"/></svg></button><button aria-label="Dynamic pan"><svg><use href="#pan"/></svg></button><button aria-label="Dynamic rotate"><svg><use href="#orbit"/></svg></button>
    </div>
  </div>

  <footer class="status">
    <span class="s-help">For Help, press F1</span><span class="s-node">Node-4</span><span class="s-u">U: 0, 5, 0</span><span class="s-g">G: 0, 5, 0</span>
    <select class="f" aria-label="Force unit"><option>kN</option></select>
    <select class="f" aria-label="Length unit"><option>m</option></select>
    <button class="sb" aria-label="Snap node"><svg viewBox="0 0 12 12"><path fill="none" stroke="#888" d="M6 1v10M1 6h10M4 4h4v4H4z"/></svg></button><button class="sb" aria-label="Snap grid"><svg viewBox="0 0 12 12"><path fill="none" stroke="#888" d="M3 1v9h8M6 2v6M9 2v6M1 6h3"/></svg></button><button class="sb" aria-label="Run"><svg viewBox="0 0 12 12"><path fill="#888" d="M4 2l5 4-5 4z"/></svg></button>
    <select class="f narrow" aria-label="Filter"><option>none</option></select>
    <button class="qm" aria-label="Query">?</button><i class="cyan"></i>
    <span class="spin off"><input class="f" value="0" aria-label="Current" disabled><i></i></span><span>/</span><span class="spin"><input class="f" value="2" aria-label="Total"><i></i></span>
  </footer>

  <footer class="taskbar">
    <button aria-label="Start"><svg viewBox="0 0 28 28"><circle cx="14" cy="14" r="12.500" fill="#1d5a92" stroke="#345"/><path fill="#6fb4de" d="M3 10a12 12 0 0 1 22 0q-11 5-22 0z" opacity=".8"/><path fill="#e8562a" d="M7 9q3-2 6-.5L12 14q-3-1-6 .5z"/><path fill="#8cc63f" d="M14.500 9q3 1.500 6 0l-1.500 5.500q-3 1.500-6 0z"/><path fill="#3aa0e0" d="M6 16q3-1.500 6-.5L10.500 21q-3-1.500-6 .5z"/><path fill="#fbc52d" d="M13 16q3 1.500 6 0l-1.500 5.500q-3 1.500-6 0z"/></svg></button>
    <button aria-label="Skype"><svg viewBox="0 0 24 24"><circle cx="8" cy="8" r="7" fill="#1ea6e2"/><circle cx="16" cy="16" r="7" fill="#1ea6e2"/><circle cx="12" cy="12" r="9" fill="#1ea6e2"/><path fill="none" stroke="#fff" stroke-width="2.500" stroke-linecap="round" d="M16 8.500C14 6 8 6.500 8 9.500c0 3.500 8 1.500 8 5 0 3-6 3.500-8 1"/></svg></button>
    <button aria-label="Maps"><svg viewBox="0 0 24 24"><path fill="#a9c068" d="M2 6l17-4 3 15-16 5z"/><path fill="#cddb9c" d="M2 6l17-4-6 11z"/><path fill="#8ba653" d="M6 22l7-9 9 4z"/></svg></button>
    <button class="run" aria-label="Internet Explorer"><svg viewBox="0 0 24 24"><path fill="none" stroke="#39a7e0" stroke-width="3.500" d="M5 13h14c0-9-14-9-14 0 0 8 10 9 13 3"/><path fill="none" stroke="#f3c22f" stroke-width="2" d="M2 22C-1 17 14 2 22 3c2 1 1 3 0 5"/></svg></button>
    <button aria-label="Calculator"><svg viewBox="0 0 24 24"><path fill="#cfe2f4" stroke="#6b8db3" d="M5 2h14v20H5z"/><path fill="#7fa9d4" d="M7 4h10v5H7z"/><path stroke="#4e78aa" stroke-width="2" stroke-dasharray="2 2" d="M7 12h10M7 16h10M7 20h10"/></svg></button>
    <button class="run" aria-label="Viewer"><svg viewBox="0 0 24 24"><g fill="#f29d18" stroke="#3a2503" stroke-width="1.300"><circle cx="12" cy="4" r="3"/><circle cx="18" cy="6.500" r="3"/><circle cx="20" cy="12" r="3"/><circle cx="18" cy="18" r="3"/><circle cx="12" cy="20" r="3"/><circle cx="6" cy="18" r="3"/><circle cx="4" cy="12" r="3"/><circle cx="6" cy="6.500" r="3"/></g><circle cx="12" cy="12" r="5" fill="#3a2503"/><circle cx="12" cy="12" r="2.500" fill="#f29d18"/></svg></button>
    <button class="run" aria-label="Explorer"><svg viewBox="0 0 24 24"><path fill="#e9cf74" stroke="#b89b3f" d="M2 4h7l2 2h11v14H2z"/><path fill="#f8ebb0" d="M3 9h18v11H3z"/><path fill="#6fb2e4" d="M5 15h14v7h-3v-4H8v4H5z"/><path fill="#4aa14a" d="M13 5h3v3h-3z"/></svg></button>
    <button class="run stack" aria-label="PowerPoint"><svg viewBox="0 0 24 24"><path fill="#fff" stroke="#c65a35" d="M7 2h14v16H7z"/><path fill="#e8b49c" d="M9 4h10v3H9z"/><path fill="#cb4a22" d="M2 8h14v13H2z"/><path fill="none" stroke="#fff" stroke-width="2" d="M8 11H5v7h3M10 18v-6h3v3h-3"/></svg></button>
    <button class="run" aria-label="Gen 2013"><svg viewBox="0 0 16 16"><use href="#logo"/></svg></button>
    <div class="tray">
      <svg viewBox="0 0 12 12"><path fill="#fff" d="M3 8l3-4 3 4z"/></svg>
      <svg viewBox="0 0 12 12"><path fill="#4a5a6c" stroke="#fff" d="M4 3h7v5H4zM1 1v9h5M6 10h4"/></svg>
      <svg viewBox="0 0 12 12"><path fill="#fff" d="M1 4h2l3-3v10L3 8H1z"/><path fill="none" stroke="#fff" d="M8 4q1.500 2 0 4M10 2q3 4 0 8"/></svg>
      <div class="clock"><time>11:10</time><time>26/07/2013</time></div>
    </div>
    <button class="peek" aria-label="Show desktop"></button>
  </footer>
</main>
</body>
</html>
```
FILE: styles.css
```css
* { box-sizing: border-box; }
body { margin: 0; background: #000; color: #222; font: 8px/12px "Noto Sans", "DejaVu Sans", sans-serif; }
button, input, select { margin: 0; padding: 0; border: 0; border-radius: 0; background: none; color: inherit; font: inherit; }
button { display: inline-flex; align-items: center; justify-content: center; white-space: nowrap; }
h1, h2 { margin: 0; font: inherit; white-space: nowrap; }
svg { display: block; flex: none; }
.sprite { display: none; }

.app { display: flex; flex-direction: column; min-height: 100vh; margin: 0 190px; background: #dcdddd; overflow: hidden; }

/* title and menus */
.titlebar { display: flex; align-items: center; gap: 5px; height: 16px; padding-left: 2px; border-top: 1px solid #4d5560; background: linear-gradient(90deg, #d5dbe2, #bccddf 45%, #b7c9dd); color: #3c434c; }
.ico { width: 12px; height: 12px; }
.winbtns { display: flex; gap: 2px; margin-left: auto; }
.winbtns button { width: 22px; height: 12px; border: 1px solid #8a9bb0; border-radius: 0 0 3px 3px; background: #cfdbe8; }
.winbtns svg { width: 14px; height: 9px; }
.menubar { display: flex; align-items: center; height: 16px; padding: 0 3px; }
.menubar .ico { margin: 0 2px; }
.menus { display: flex; justify-content: space-between; width: 408px; }
.mdi { display: flex; gap: 3px; margin-left: auto; }
.mdi svg { width: 8px; height: 8px; }
.grip { width: 2px; height: 11px; margin: 0 2px; background: repeating-linear-gradient(#999 0 1px, transparent 1px 3px); flex: none; }

/* toolbars */
.ribbons { display: flex; gap: 5px; padding: 0 5px; height: 37px; }
.ribbon { border: 1px solid #f4f4f4; border-right-color: #a5a5a5; border-bottom-color: #a5a5a5; background: linear-gradient(#e9e9e9, #e9e9e9 15px, #fff 16px, #f1f1f1); }
.ribbon-a { width: 221px; }
.ribbon-b { width: 464px; }
.rtabs { display: flex; justify-content: space-between; height: 16px; padding: 2px 0 1px; color: #8b8b8b; }
.rtabs button { padding: 0 4px; border-right: 1px solid #bbb; }
.rtabs .on { background: #fdfdfd; color: #222; border-right-color: #333; }
.ribbon-b .rtabs { width: 431px; margin-left: 3px; }
.tools { display: flex; align-items: center; height: 17px; }
.tools button { flex: 1; height: 16px; border: 1px solid transparent; }
.tools svg { width: 13px; height: 13px; }
.tools .sel { border-color: #6fa5dc; background: #d5e8fa; }
.ribbon-a .tools { padding: 0 0 0 2px; }
.ribbon-b .tools { width: 337px; padding: 0 0 0 4px; }
.sep { width: 1px; height: 11px; margin: 0 2px; background: #b5b5b5; flex: none; }
.sep.wide { margin: 0 4px; }
.caret, .al, .ar, .au, .ad { width: 0; height: 0; flex: none; border: 3px solid transparent; }
.caret { border-width: 2px; border-top-color: #222; border-bottom: 0; }
.caret.dim { border-top-color: #aaa; }
.bar2 { display: flex; align-items: center; height: 20px; padding: 0 3px 2px; }
.bar2 .tools { background: linear-gradient(#fff, #ebebeb); }
.t-file { width: 164px; }
.t-select { width: 293px; }
.t-lock { width: 55px; padding-left: 1px; }
.pick { appearance: none; width: 85px; height: 17px; background: linear-gradient(#222, #222) right 4px top 7px / 5px 1px no-repeat, linear-gradient(#222, #222) right 5px top 8px / 3px 1px no-repeat, linear-gradient(#222, #222) right 6px top 9px / 1px 1px no-repeat, #fff; }
.lone { width: 17px; height: 17px; background: #f6f6f6; }
.lone svg { width: 13px; height: 13px; }

/* left panel */
.work { display: flex; flex: 1; min-height: 0; }
.side { display: flex; flex-direction: column; width: 178px; border-right: 1px solid #888; background: #ededed; }
.side-head { display: flex; align-items: center; gap: 5px; height: 14px; padding: 0 5px 0 3px; background: linear-gradient(#c9dcf1, #9dbde3); color: #26364c; }
.side-head h2, .msg-head h2 { margin-right: auto; font-size: 8px; }
.side-head svg, .msg-head svg, .view-tabs button svg { width: 7px; height: 7px; }
.side-tabs { display: flex; justify-content: space-between; align-items: flex-end; height: 17px; padding: 0 9px 1px 4px; color: #8b8b8b; }
.side-tabs button { padding: 0 4px; height: 13px; border-right: 1px solid #bbb; }
.side-tabs .on { background: #fafafa; color: #222; border-right-color: #222; }
.tree { display: grid; grid-auto-rows: 1fr; height: 350px; margin: 0 0 auto 2px; padding: 0; list-style: none; overflow: hidden; font: 8px/11px Roboto, "Liberation Sans", sans-serif; border-top: 1px solid #fff; }
.tree li { display: flex; align-items: center; gap: 4px; white-space: pre; background: repeating-linear-gradient(#aaa 0 1px, transparent 1px 2px) 7px 0 / 1px 100% no-repeat; }
.tree svg { width: 12px; height: 11px; }
.tree .l0 { padding-left: 2px; background: none; }
.tree .l1 { padding-left: 4px; }
.tree .l2 { padding-left: 18px; }
.tree .l3 { padding-left: 32px; background: repeating-linear-gradient(#aaa 0 1px, transparent 1px 2px) 7px 0 / 1px 100% no-repeat, repeating-linear-gradient(#aaa 0 1px, transparent 1px 2px) 35px 0 / 1px 60% no-repeat; }
.tree .end, .tree .last { background: none; }
.tree .l3.end { background: repeating-linear-gradient(#aaa 0 1px, transparent 1px 2px) 35px 0 / 1px 60% no-repeat; }
.tg { width: 7px; height: 7px; flex: none; border: 1px solid #999; background: linear-gradient(#333, #333) center / 3px 1px no-repeat, #fff; }
.tg.plus { background: linear-gradient(#333, #333) center / 3px 1px no-repeat, linear-gradient(#333, #333) center / 1px 3px no-repeat, #fff; }
.st { width: 7px; height: 1px; flex: none; border-left: 4px solid transparent; border-top: 1px dotted #999; }
.al { border-right-color: #222; border-left: 0; }
.ar { border-left-color: #222; border-right: 0; }
.au { border-width: 2px; border-bottom: 3px solid #222; border-top: 0; }
.ad { border-width: 2px; border-top: 3px solid #222; border-bottom: 0; }
.hscroll { display: flex; align-items: center; justify-content: space-between; height: 13px; padding: 0 6px; margin-right: 4px; background: #f6f6f6; }
.thumb { border: 1px solid #fff; border-right-color: #777; border-bottom-color: #777; background: #ececec; }
.side > .hscroll .thumb { width: 110px; height: 11px; margin-right: 36px; }
.side-foot { display: flex; height: 17px; margin-top: 2px; border-top: 1px solid #333; background: #ececec; color: #8b8b8b; }
.side-foot button { padding: 0 6px; height: 15px; border-right: 1px solid #bbb; }
.side-foot .on { background: #fcfcfc; color: #222; border-right-color: #222; }

/* drawing area */
.center { display: flex; flex: 1; flex-direction: column; min-width: 0; margin-left: 2px; }
.view { display: flex; flex: 1; flex-direction: column; border-bottom: 1px solid #999; background: #ececec; }
.view-tabs { display: flex; align-items: center; height: 17px; padding: 0 6px 0 2px; background: linear-gradient(#fafafa, #e3e3e3); }
.tri { width: 8px; height: 8px; }
.next { margin: 0 9px 0 auto; }
.lead { width: 18px; height: 15px; align-self: flex-end; }
.vtab { display: flex; align-items: center; gap: 5px; height: 15px; padding: 0 6px 0 0; border-right: 1px solid #333; border-top: 1px solid #999; background: #fdfdfd; font-weight: 700; align-self: flex-end; }
.vtab svg { width: 12px; height: 12px; }
.canvas { position: relative; flex: 1; margin: 0 2px 2px 1px; border: 1px solid #555; border-right-color: #bbb; border-bottom-color: #bbb; background: linear-gradient(#fff, #fffdee); }
.model { position: absolute; inset: 0; width: 100%; height: 100%; }

/* messages */
.msg { margin-top: 3px; background: #ececec; }
.msg-head { display: flex; align-items: center; gap: 6px; height: 15px; padding: 0 5px 0 1px; background: linear-gradient(#fbfbfb, #dedede); }
.msg-body { display: flex; justify-content: space-between; height: 68px; padding: 1px 3px 0 1px; border-top: 2px solid #777; border-left: 1px solid #777; background: #e8e8e4; }
pre { margin: 11px 0 0; overflow: hidden; font: 8px/11px "Liberation Mono", monospace; }
.vscroll { display: flex; flex-direction: column; align-items: center; width: 11px; padding: 4px 0; background: #f4f4f4; }
.vscroll .thumb { width: 10px; height: 11px; margin: auto 0 5px; border-color: #aaa; }
.msg-tabs { display: flex; align-items: center; height: 13px; font: 7px/11px "Liberation Sans", sans-serif; border-top: 1px solid #555; }
.nav { display: flex; }
.nav button { width: 13px; height: 12px; border: 1px solid #fff; border-right-color: #777; border-bottom-color: #777; }
.nav i { opacity: .5; }
.bar { width: 1px; height: 6px; margin: 0 1px; background: #222; }
.slant { width: 8px; height: 12px; }
.msg-tabs > button { padding: 0 3px; min-width: 70px; }
.msg-tabs .on { font-weight: 700; }
.mini { gap: 4px; margin: 0 1px 0 auto; width: 232px; height: 12px; padding: 0 3px; border-left: 1px solid #555; }
.mini .thumb { width: 12px; height: 12px; margin-right: auto; }

/* right tool strip */
.vtools { display: flex; flex-direction: column; align-items: center; align-self: flex-start; width: 17px; height: 433px; margin: 0 1px 0 2px; background: #fbfbfb; }
.vtools button { flex: 1; min-height: 0; }
.vtools svg { width: 13px; height: 13px; }
.hgrip { width: 10px; height: 1px; margin: 3px 0; background: repeating-linear-gradient(90deg, #888 0 1px, transparent 1px 3px); }
.hsep { width: 12px; height: 1px; margin: 2px 0; background: #aaa; }
.r90 { transform: rotate(90deg); }
.r180 { transform: rotate(180deg); }
.r270 { transform: rotate(270deg); }

/* dialog */
.dialog { position: absolute; left: 109px; top: 40px; width: 318px; border: 1px solid #3f5a78; background: #9fbbd9; padding: 0 2px 2px; font-family: Lato, "Noto Sans", sans-serif; }
.dlg-title { display: flex; align-items: center; justify-content: space-between; height: 17px; padding: 0 1px 0 4px; background: linear-gradient(#c3d5ea, #9db9db); margin: 0 -2px; font-family: "Noto Sans", sans-serif; }
.dlg-title button { width: 23px; height: 12px; border: 1px solid #7d2f2a; border-radius: 2px; background: linear-gradient(#dd9a90, #bb3c2f 50%, #c45a4a); color: #fff; }
.dlg-title svg { width: 8px; height: 6px; }
.dlg-body { padding: 6px 8px 8px; background: #eee; }
.dtabs { display: flex; align-items: flex-end; height: 16px; padding-left: 2px; }
.dtabs button { width: 27px; height: 14px; border: 1px solid #fff; border-bottom: 0; border-right: 0; }
.dtabs .on { width: 42px; height: 16px; border-right: 1px solid #555; }
.page { display: flex; justify-content: space-between; padding: 9px 8px 11px 12px; border: 1px solid #fff; border-right-color: #555; border-bottom-color: #555; }
.f { height: 14px; padding: 0 3px; border: 1px solid #777; border-right-color: #ddd; border-bottom-color: #ddd; background: #fff; }
.figs { display: flex; flex-direction: column; width: 96px; }
.idrow { display: flex; align-items: center; justify-content: space-between; margin-bottom: 6px; }
.idrow .f { width: 41px; }
.fig { width: 96px; background: #000; margin-bottom: 10px; }
.fig:last-child { margin-bottom: 0; }
.dim, .red, .ax { text-anchor: middle; font: 700 7px "Liberation Sans", sans-serif; fill: #fff; }
.red { font-size: 10px; font-weight: 400; fill: #e02828; }
.ax { font-size: 10px; fill: #23238c; }
.opts { display: flex; flex-direction: column; width: 169px; }
.opts label { display: flex; align-items: center; }
.orow { display: flex; align-items: center; height: 18px; }
.orow:first-child { height: 14px; margin-bottom: 1px; }
input[type=radio], input[type=checkbox] { appearance: none; width: 8px; height: 8px; margin-right: 4px; border: 1px solid #666; border-right-color: #ccc; border-bottom-color: #ccc; border-radius: 50%; background: #fff; }
input[type=radio]:checked { background: radial-gradient(#111 0 1px, #fff 2px); }
input[type=checkbox] { border-radius: 0; border-color: #555; }
input[type=checkbox]:checked { background: linear-gradient(45deg, transparent 20%, #111 20% 45%, transparent 45%) 0 2px / 4px 4px no-repeat, linear-gradient(135deg, transparent 40%, #111 40% 65%, transparent 65%) 2px 0 / 4px 6px no-repeat, #fff; }
.kinds { justify-content: space-between; padding-left: 1px; }
.kinds .f { width: 61px; margin-right: 1px; }
.sel-off { appearance: none; border-color: #888; background: linear-gradient(#888, #888) right 3px top 4px / 5px 1px no-repeat, linear-gradient(#888, #888) right 4px top 5px / 3px 1px no-repeat, linear-gradient(#888, #888) right 5px top 6px / 1px 1px no-repeat, linear-gradient(#aaa, #aaa) right 11px top / 1px 100% no-repeat, #ececec; }
.val label { width: 89px; }
.val .f { width: 53px; margin-right: 8px; }
.off { color: #a2a2a2; }
.off input { background: #eee; color: #777; }
.rib span { width: 70px; }
.rib label { width: 51px; }
.stabs { display: flex; align-items: flex-end; height: 16px; margin: 1px 0 0 2px; }
.stabs button { height: 13px; padding: 0 2px; min-width: 41px; border-right: 1px solid #555; border-top: 1px solid #fff; }
.stabs .on { height: 15px; min-width: 44px; border-left: 1px solid #fff; }
.sect { flex: 1; margin-left: 2px; padding: 15px 4px 0 15px; border: 1px solid #fff; border-right-color: #555; border-bottom-color: #555; }
.chk { height: 14px; margin-left: 3px; }
.shape { display: flex; align-items: center; width: 142px; height: 21px; margin-top: 4px; border: 1px solid #777; border-right-color: #ccc; border-bottom-color: #ccc; background: #fff; }
.shape i { width: 17px; height: 17px; border: 3px solid #bbb; background: #808000; }
.shape select { flex: 1; height: 19px; padding-left: 3px; }
.shape select, .status select { appearance: none; background: linear-gradient(#111, #111) right 3px center / 5px 1px no-repeat, linear-gradient(#111, #111) right 4px top calc(50% + 1px) / 3px 2px no-repeat, linear-gradient(#777, #777) right 10px top / 1px 100% no-repeat, linear-gradient(#ececec, #ececec) right / 10px 100% no-repeat, #fff; }
.dist { height: 13px; margin: 0 0 0 2px; }
.srow { display: flex; align-items: center; height: 17px; padding-left: 1px; }
.srow > :first-child { width: 52px; }
.srow .in { padding-left: 5px; }
.srow .f { width: 54px; }
.srow select.f { width: 93px; }
.srow > span:last-child { margin: 3px 0 0 12px; }
.dlg-foot { display: flex; gap: 3px; margin-top: 12px; }
.dlg-foot button { width: 45px; height: 16px; border: 1px solid #fff; border-right-color: #555; border-bottom-color: #555; }
.dlg-foot .wide { width: 116px; margin-right: auto; }
.dlg-foot .def { border: 1px solid #333; box-shadow: inset -1px -1px #888; }
.dlg-foot :disabled { color: #a5a5a5; }
.pointer { position: absolute; left: 28px; top: 29px; width: 9px; height: 14px; }

/* status bar */
.status { display: flex; align-items: center; height: 15px; padding: 0 3px 0 4px; background: #efefef; border-top: 1px solid #fafafa; white-space: nowrap; }
.s-help { flex: 335; }
.s-node { flex: 71; }
.s-u { flex: 114; }
.s-g { flex: 114; }
.status .f { height: 13px; padding: 0 2px; }
.status select { width: 33px; margin-right: 3px; }
.status .narrow { width: 31px; margin: 0 5px 0 3px; padding: 0 11px 0 1px; }
.sb { width: 15px; height: 13px; border: 1px solid #fff; border-right-color: #888; border-bottom-color: #888; }
.sb svg { width: 11px; height: 11px; }
.qm { width: 13px; height: 12px; border: 1px solid #277; background: #d5ffff; font-weight: 700; }
.cyan { width: 13px; height: 13px; margin: 0 1px 0 2px; background: #00f0f0; }
.spin { display: flex; align-items: center; width: 34px; height: 13px; margin-left: 5px; background: #fff; }
.spin.off { width: 24px; margin: 0 4px 0 0; background: #eee; }
.spin input { flex: 1; min-width: 0; text-align: center; }
.spin i { width: 10px; height: 12px; background: linear-gradient(#222, #222) center 3px / 3px 1px no-repeat, linear-gradient(#999, #999) center / 9px 1px no-repeat, linear-gradient(#222, #222) center 8px / 3px 1px no-repeat, #ececec; }

/* taskbar */
.taskbar { display: flex; align-items: center; height: 28px; padding-left: 2px; background: linear-gradient(90deg, #7f90a8, #a6bbda 8%, #a9bfde 78%, #7689a0 84%, #6f8194); }
.taskbar > button { width: 42px; height: 26px; margin-right: 2px; }
.taskbar > button:first-child { width: 34px; margin-right: 4px; }
.taskbar > button svg { width: 22px; height: 22px; }
.taskbar > button:first-child svg { width: 26px; height: 26px; }
.taskbar .run { border: 1px solid #6d82a2; border-radius: 2px; background: linear-gradient(#d3dff0, #b5c7e2); box-shadow: inset 0 0 0 1px #dfe8f5; }
.taskbar .stack { width: 38px; margin-right: 5px; }
.tray { display: flex; align-items: center; gap: 6px; margin-left: auto; color: #fff; }
.tray svg { width: 12px; height: 12px; }
.clock { display: grid; justify-items: center; width: 58px; }
.taskbar > .peek { width: 10px; height: 28px; margin: 0; border: 1px solid #3f4d5c; background: linear-gradient(#8b99a8, #55626f); }
```
